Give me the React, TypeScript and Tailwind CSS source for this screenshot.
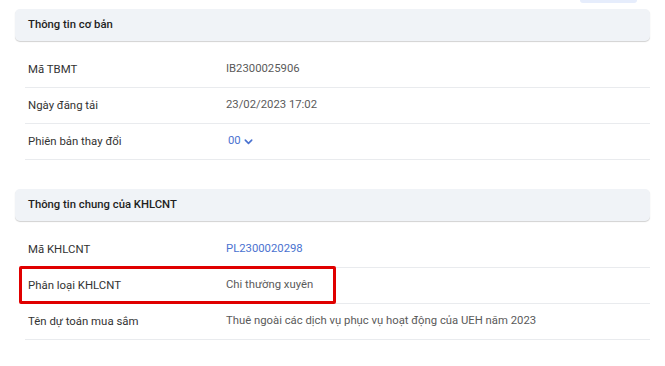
const basic = [
  { label: 'Mã TBMT', value: 'IB2300025906' },
  { label: 'Ngày đăng tải', value: '23/02/2023 17:02' },
];

const Row = ({ label, children }: { label: string; children: React.ReactNode }) => (
  <div className="flex h-[36px] items-center border-b border-[#e9ebee] pl-[3px]">
    <div className="w-[198px] text-[11.4px] text-[#333]">{label}</div>
    <div className="text-[11.3px] text-[#5a5a5a]">{children}</div>
  </div>
);

const SectionHeader = ({ title }: { title: string }) => (
  <div className="mx-[15px] flex h-[32px] items-center rounded-[5px] bg-[#f0f3f7] pl-[13px] text-[11.3px] font-medium text-[#1f1f1f] shadow-[0_1px_1px_rgba(0,0,0,0.18)]">
    {title}
  </div>
);

export default function App() {
  return (
    <div
      className="relative h-[366px] w-[665px] overflow-hidden bg-white"
      style={{ fontFamily: 'Roboto, "Noto Sans", sans-serif' }}
    >
      <div className="flex h-[9px] items-start">
        <div className="ml-[580px] h-[3px] w-[57px] rounded-b-full bg-[#e6edfc]" />
      </div>

      <SectionHeader title="Thông tin cơ bản" />
      <div className="ml-[25px] mr-[15px] mt-[11px]">
        {basic.map((r) => (
          <Row key={r.label} label={r.label}>
            {r.value}
          </Row>
        ))}
        <Row label="Phiên bản thay đổi">
          <span className="ml-[2px] flex items-center gap-[2px] text-[#4a72d0]">
            00
            <svg width="11" height="11" viewBox="0 0 24 24" fill="none" stroke="#4a72d0" strokeWidth="3.5" strokeLinecap="round" strokeLinejoin="round">
              <path d="M5 9l7 7 7-7" />
            </svg>
          </span>
        </Row>
      </div>

      <div className="mt-[29px]">
        <SectionHeader title="Thông tin chung của KHLCNT" />
      </div>
      <div className="ml-[25px] mr-[15px] mt-[11px]">
        <Row label="Mã KHLCNT">
          <span className="text-[#4a72d0]">PL2300020298</span>
        </Row>
        <Row label="Phân loại KHLCNT">Chi thường xuyên</Row>
        <Row label="Tên dự toán mua sắm">Thuê ngoài các dịch vụ phục vụ hoạt động của UEH năm 2023</Row>
      </div>

      <div className="absolute left-[19px] top-[266px] h-[38px] w-[317px] rounded-[2px] border-[3px] border-[#e00000]" />
    </div>
  );
}
